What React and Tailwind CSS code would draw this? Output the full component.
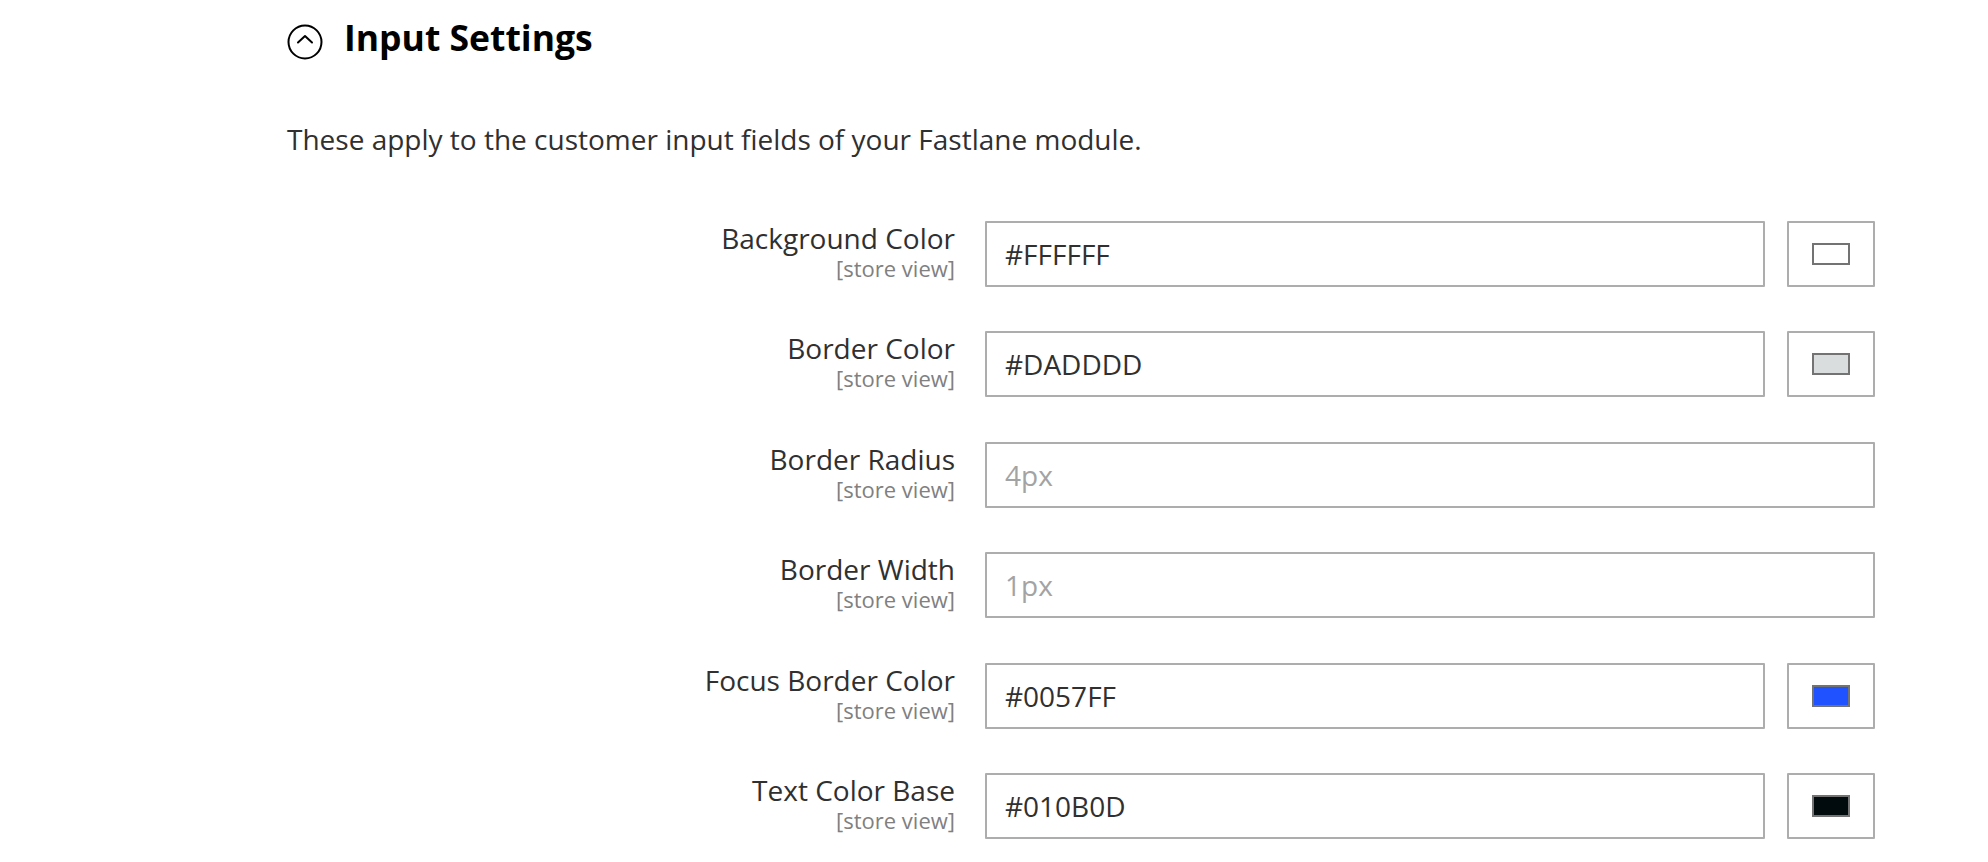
import { useState } from "react";

const fields = [
  { label: "Background Color", value: "#FFFFFF", swatch: "bg-[#ffffff]" },
  { label: "Border Color", value: "#DADDDD", swatch: "bg-[#dadddd]" },
  { label: "Border Radius", placeholder: "4px" },
  { label: "Border Width", placeholder: "1px" },
  { label: "Focus Border Color", value: "#0057FF", swatch: "bg-[#2152ff]" },
  { label: "Text Color Base", value: "#010B0D", swatch: "bg-[#010b0d]" },
];

function CollapseIcon() {
  return (
    <svg viewBox="0 0 36 36" className="w-[36px] h-[36px] mt-[8px] shrink-0" fill="none" stroke="#000" strokeWidth="2">
      <circle cx="18" cy="18" r="16.5" />
      <polyline points="11,18.5 18,12 25,18.5" strokeLinecap="round" strokeLinejoin="round" />
    </svg>
  );
}

function FieldRow({ field }) {
  const [val, setVal] = useState(field.value || "");
  return (
    <div className="flex h-[66px]">
      <div className="w-[698px] shrink-0 pr-[30px] pt-[1px] text-right">
        <div className="text-[28px] leading-[32px] text-[#303030]">{field.label}</div>
        <div className="text-[22px] leading-[28px] text-[#808080]">[store view]</div>
      </div>
      <div className="flex flex-1 gap-[22px]">
        <input
          value={val}
          onChange={(e) => setVal(e.target.value)}
          placeholder={field.placeholder}
          className="flex-1 min-w-0 h-[66px] border-2 border-[#adadad] rounded-[1px] bg-white px-[18px] text-[28px] text-[#303030] placeholder:text-[#a3a3a3] outline-none"
        />
        {field.swatch && (
          <div className="w-[88px] h-[66px] border-2 border-[#adadad] rounded-[1px] flex items-center justify-center shrink-0">
            <div className={`w-[38px] h-[22px] border-[2.5px] border-[#737373] ${field.swatch}`} />
          </div>
        )}
      </div>
    </div>
  );
}

export default function App() {
  return (
    <div className="min-h-screen bg-white pl-[287px] pt-[16px] font-['Open_Sans',sans-serif]">
      <div className="w-[1588px]">
        {/* Section heading */}
        <div className="flex items-start gap-[21px]">
          <CollapseIcon />
          <h2 className="text-[35.5px] leading-[43px] font-bold text-black">Input Settings</h2>
        </div>
        <p className="mt-[60px] text-[28px] leading-[39px] text-[#303030]">
          These apply to the customer input fields of your Fastlane module.
        </p>
        <div className="mt-[62px] flex flex-col gap-[44.4px]">
          {fields.map((f) => (
            <FieldRow key={f.label} field={f} />
          ))}
        </div>
      </div>
    </div>
  );
}
